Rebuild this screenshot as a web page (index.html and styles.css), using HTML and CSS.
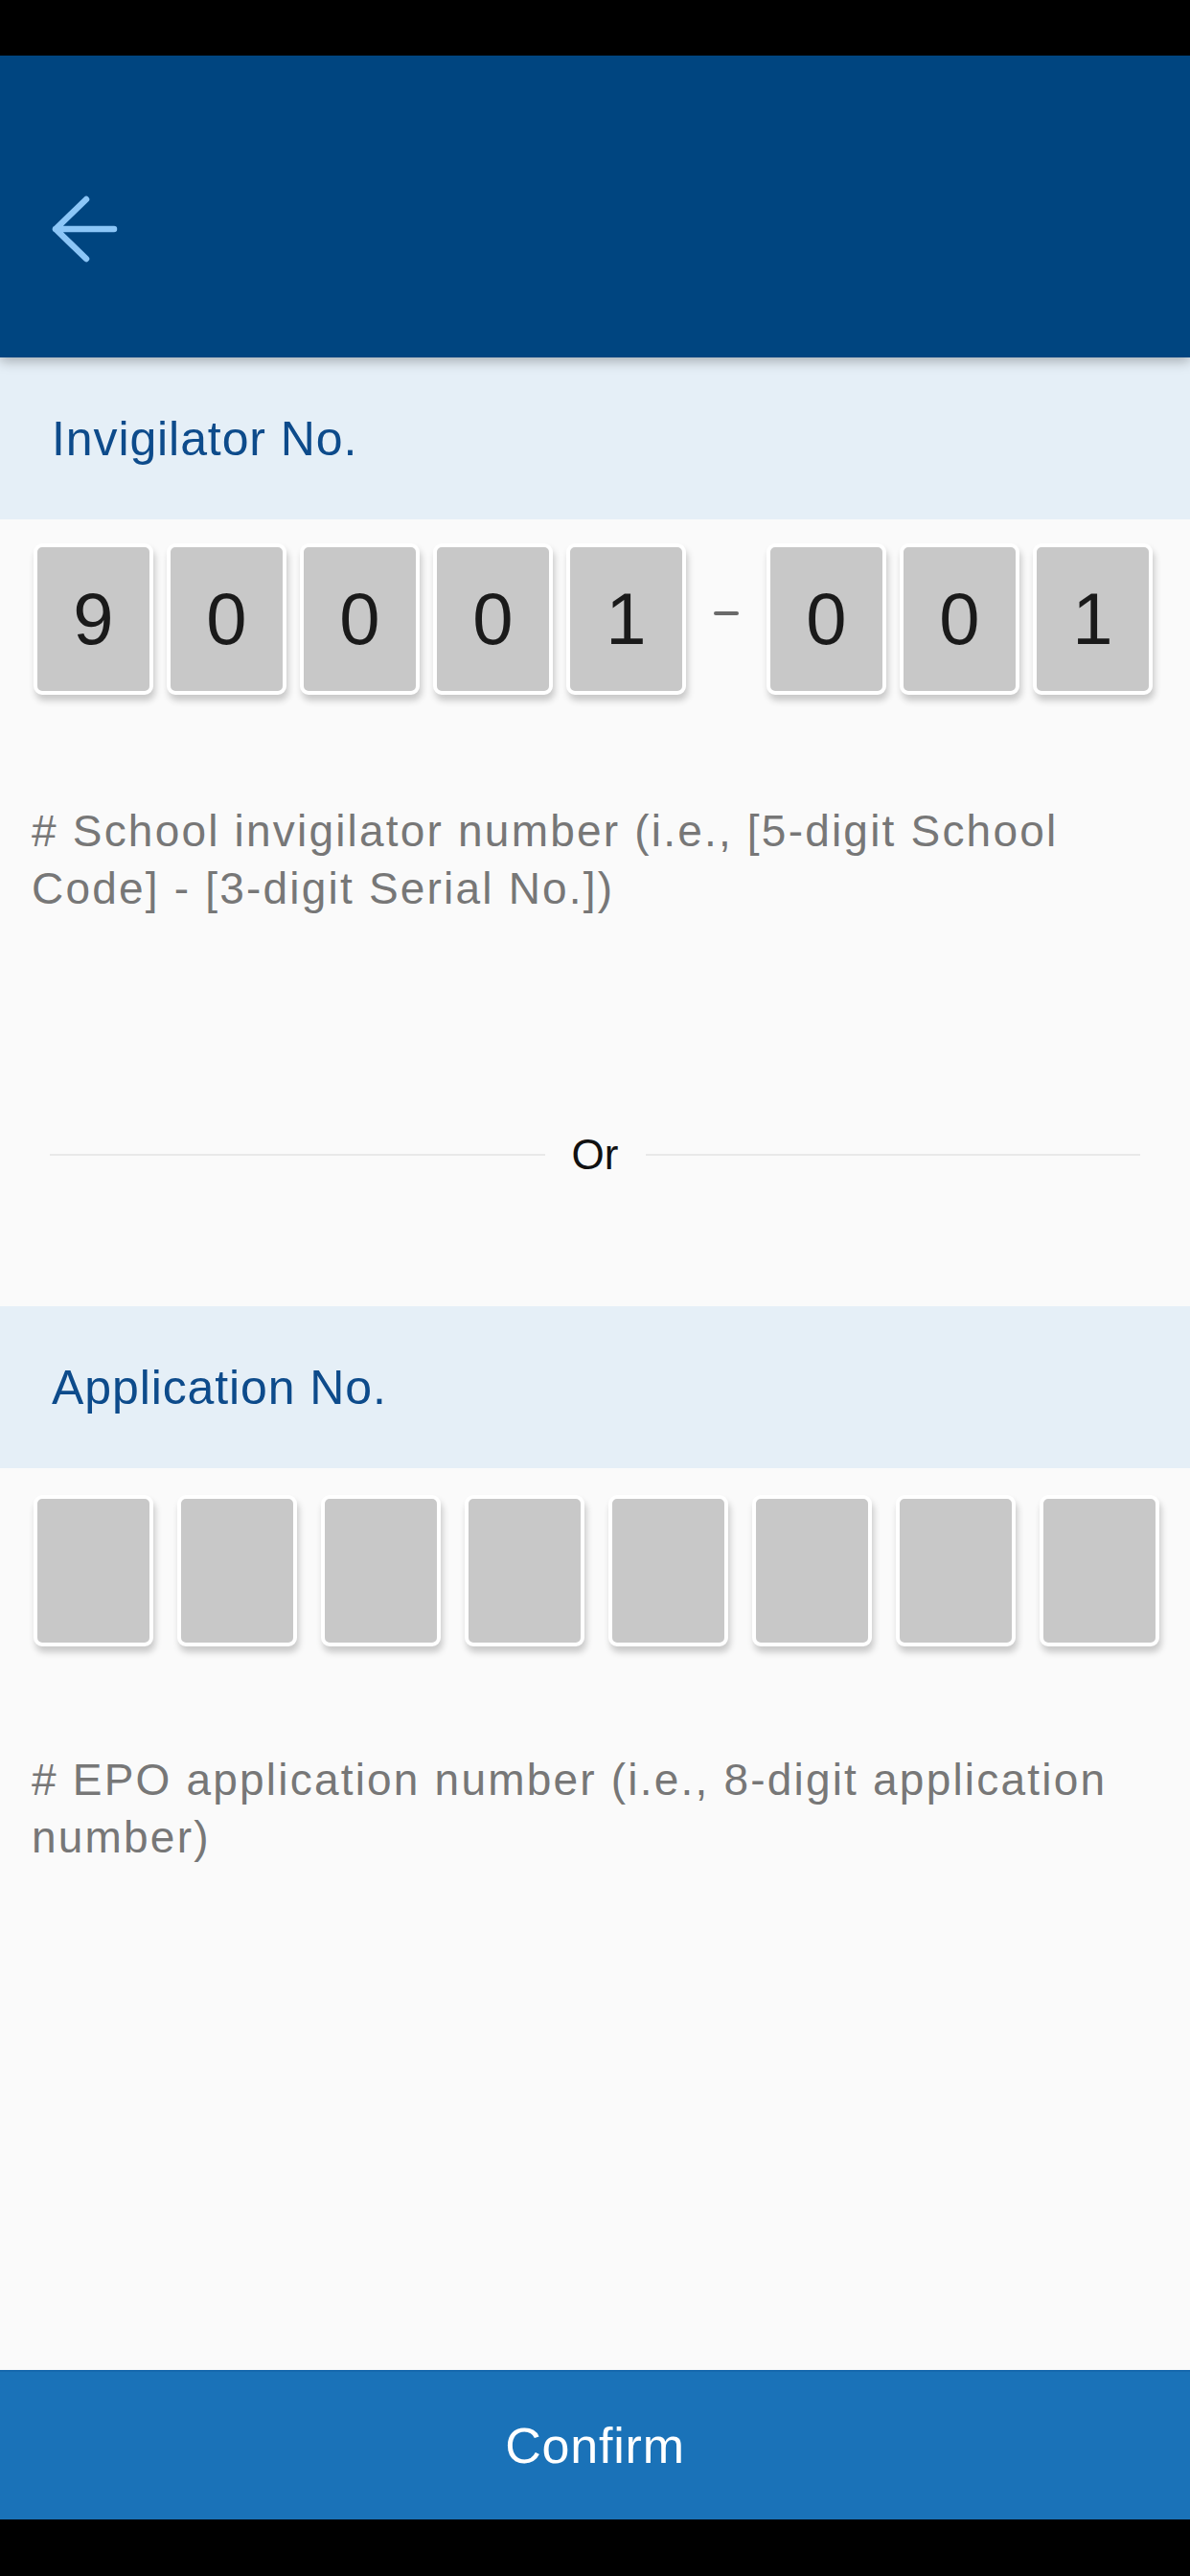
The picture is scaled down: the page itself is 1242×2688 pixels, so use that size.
FILE: index.html
```html
<!DOCTYPE html>
<html lang="en">
<head>
<meta charset="utf-8">
<title>Invigilator</title>
<link rel="stylesheet" href="styles.css">
</head>
<body>
<div class="screen">
  <div class="status-bar"></div>
  <header class="app-bar">
    <svg class="back" width="72" height="72" viewBox="0 0 72 72" aria-hidden="true">
      <path d="M66 36H5M37 5L5 36L37 67" fill="none" stroke="#8cc6f7" stroke-width="6.5" stroke-linecap="round" stroke-linejoin="round"/>
    </svg>
  </header>

  <section class="section-head"><h2>Invigilator No.</h2></section>
  <div class="code-row code-row-inv">
    <div class="group">
      <div class="cell">9</div>
      <div class="cell">0</div>
      <div class="cell">0</div>
      <div class="cell">0</div>
      <div class="cell">1</div>
    </div>
    <div class="dash"></div>
    <div class="group">
      <div class="cell">0</div>
      <div class="cell">0</div>
      <div class="cell">1</div>
    </div>
  </div>
  <p class="hint hint-inv"># School invigilator number (i.e., [5-digit School Code] - [3-digit Serial No.])</p>

  <div class="divider"><span class="line"></span><span class="or">Or</span><span class="line"></span></div>

  <section class="section-head"><h2>Application No.</h2></section>
  <div class="code-row code-row-app">
    <div class="cell"></div>
    <div class="cell"></div>
    <div class="cell"></div>
    <div class="cell"></div>
    <div class="cell"></div>
    <div class="cell"></div>
    <div class="cell"></div>
    <div class="cell"></div>
  </div>
  <p class="hint hint-app"># EPO application number (i.e., 8-digit application number)</p>

  <div class="spacer"></div>
  <button class="confirm">Confirm</button>
  <div class="home-bar"></div>
</div>
</body>
</html>
```

FILE: styles.css
```css
html, body {
  margin: 0;
  padding: 0;
  background: #000;
}
.screen {
  width: 1242px;
  height: 2688px;
  display: flex;
  flex-direction: column;
  background: #fafafa;
  font-family: "Liberation Sans", Arial, sans-serif;
  overflow: hidden;
}
.status-bar {
  height: 58px;
  background: #000;
  flex: none;
}
.app-bar {
  height: 315px;
  background: #004580;
  flex: none;
  box-sizing: border-box;
  padding: 145px 0 0 53px;
  position: relative;
  z-index: 1;
  box-shadow: 0 4px 12px rgba(0, 0, 0, 0.28);
}
.back {
  display: block;
}
.section-head {
  height: 169px;
  flex: none;
  background: #e5eff7;
  display: flex;
  align-items: center;
  padding-left: 54px;
}
.section-head h2 {
  margin: 0;
  font-weight: normal;
  font-size: 50px;
  line-height: 1;
  color: #0d4b8b;
  letter-spacing: 0.9px;
}
.code-row {
  display: flex;
  flex: none;
  padding-left: 35px;
}
.code-row-inv {
  margin-top: 25px;
}
.code-row-app {
  margin-top: 28px;
  gap: 25px;
}
.group {
  display: flex;
  gap: 14px;
}
.dash {
  width: 84px;
  display: flex;
  align-items: center;
  justify-content: center;
}
.dash::before {
  content: "";
  width: 26px;
  height: 4px;
  border-radius: 2px;
  background: #6a6a6a;
  margin-top: -12px;
}
.cell {
  width: 125px;
  height: 158px;
  box-sizing: border-box;
  border: 4px solid #fff;
  border-radius: 9px;
  background: #c8c8c8;
  box-shadow: 2px 6px 7px rgba(0, 0, 0, 0.2);
  display: flex;
  align-items: center;
  justify-content: center;
  font-size: 76px;
  line-height: 1;
  color: #1a1a1a;
}
.hint {
  margin: 0;
  padding: 0 40px 0 33px;
  font-size: 46px;
  line-height: 60px;
  letter-spacing: 2.2px;
  color: #777;
  flex: none;
}
.hint-inv {
  margin-top: 112px;
}
.hint-app {
  margin-top: 109px;
}
.divider {
  flex: none;
  display: flex;
  align-items: center;
  height: 60px;
  margin: 218px 0 128px;
  padding: 0 52px;
}
.divider .line {
  flex: 1;
  height: 2px;
  background: #e8e8e8;
}
.divider .or {
  width: 105px;
  text-align: center;
  font-size: 44px;
  color: #111;
}
.spacer {
  flex: 1;
}
.confirm {
  flex: none;
  height: 156px;
  border: 0;
  margin: 0;
  padding: 0;
  background: #1a72b8;
  color: #fff;
  font-family: "Liberation Sans", Arial, sans-serif;
  font-size: 52px;
  letter-spacing: 0.8px;
  border-top: 2px solid #1668ad;
}
.home-bar {
  height: 59px;
  background: #000;
  flex: none;
}
```
